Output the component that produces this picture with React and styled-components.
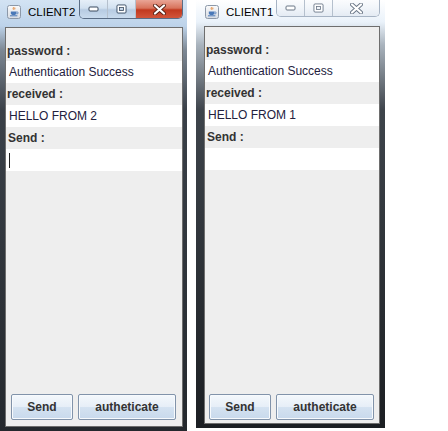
import React from 'react';
import styled, {createGlobalStyle, css} from 'styled-components';

const GlobalStyle = createGlobalStyle`
  html, body {
    margin: 0;
    padding: 0;
    background: #ffffff;
  }
  body {
    font-family: "Liberation Sans", Arial, sans-serif;
  }
`;

const Desktop = styled.div`
  display: flex;
  align-items: flex-start;
  width: 448px;
  height: 431px;
  overflow: hidden;
  background: #ffffff;
`;

const Window = styled.div`
  display: flex;
  flex-direction: column;
  box-sizing: border-box;
  width: ${({ width }) => width}px;
  height: ${({ height }) => height}px;
  margin-right: ${({ gap }) => gap || 0}px;
  padding: 0 ${({ padRight }) => padRight}px 4px ${({ padLeft }) => padLeft}px;
  ${({ active }) => active ? css`
    background: linear-gradient(to bottom, #d3e3f3 0px, #bdd3ea 26px, #7d8894 50px, #3a4048 110px, #24282d 431px);
  ` : css`
    background: linear-gradient(to bottom, #ffffff 0px, #eaf2fa 22px, #a9b3bd 45px, #3e444b 110px, #1c1f23 424px);
  `}
`;

const TitleBar = styled.div`
  display: flex;
  align-items: flex-start;
  height: ${({ h }) => h}px;
  flex: none;
  margin-left: ${({ shift }) => shift || 0}px;
`;

const TitleIcon = styled.div`
  width: 14px;
  height: 14px;
  margin-top: 5px;
  margin-left: 2px;
  flex: none;
  svg { display: block; }
`;

const TitleText = styled.span`
  margin-left: 7px;
  margin-top: 5px;
  font-size: 11.5px;
  line-height: 14px;
  color: #000000;
  font-family: "Liberation Sans", Arial, sans-serif;
  flex: 1;
`;

const Controls = styled.div`
  display: flex;
  height: ${({ active }) => active ? 18 : 16}px;
  border: 1px solid ${({ active }) => active ? '#5a6d86' : '#a7b4c4'};
  border-top: none;
  border-radius: 0 0 5px 5px;
  overflow: hidden;
  flex: none;
`;

const Ctrl = styled.div`
  display: flex;
  align-items: center;
  justify-content: center;
  width: ${({ w }) => w}px;
  & + & {
    border-left: 1px solid ${({ active }) => active ? '#6b7d94' : '#b5c0cd'};
  }
  ${({ kind, active }) => kind === 'close' && active ? css`
    background: linear-gradient(to bottom, #e9a596 0%, #d8735c 45%, #c1391f 55%, #d2553a 100%);
  ` : active ? css`
    background: linear-gradient(to bottom, #e6eff8 0%, #d2e1f0 45%, #b7cbe2 55%, #c9dbee 100%);
  ` : css`
    background: linear-gradient(to bottom, #fbfcfe 0%, #f1f5fa 50%, #e4ebf3 100%);
  `}
  svg { display: block; }
`;

const Panel = styled.div`
  flex: 1;
  display: flex;
  flex-direction: column;
  box-sizing: border-box;
  background: #eeeeee;
  border: 1px solid #6e6e6e;
  padding-top: 13px;
`;

const Label = styled.div`
  height: ${({ h }) => h || 22}px;
  display: flex;
  align-items: center;
  padding-left: ${({ indent }) => indent || 1}px;
  font-weight: bold;
  font-size: 12px;
  color: #333333;
`;

const Field = styled.div`
  height: 22px;
  display: flex;
  align-items: center;
  padding-left: 3px;
  background: #ffffff;
  font-size: 12px;
  color: #23213d;
`;

const Caret = styled.span`
  display: block;
  width: 1px;
  height: 15px;
  background: #222222;
`;

const Spacer = styled.div`
  flex: 1;
`;

const ButtonRow = styled.div`
  display: flex;
  gap: 5px;
  padding: 0 0 ${({ bottom }) => bottom}px ${({ left }) => left}px;
`;

const Button = styled.button`
  box-sizing: border-box;
  width: ${({ w }) => w}px;
  height: 26px;
  margin: 0;
  padding: 0;
  border: 1px solid #8193aa;
  border-radius: 2px;
  box-shadow: inset 0 0 0 1px #f7fafd;
  background: linear-gradient(to bottom, #f4f8fc 0%, #e6eef7 50%, #d4e2f1 51%, #c8d9ec 100%);
  font-family: "Liberation Sans", Arial, sans-serif;
  font-weight: bold;
  font-size: 12px;
  color: #333333;
`;

const JavaIcon = () => (
  <svg width="14" height="14" viewBox="0 0 14 14">
    <defs>
      <linearGradient id="jbg" x1="0" y1="0" x2="0" y2="1">
        <stop offset="0" stopColor="#fbfbfb" />
        <stop offset="1" stopColor="#d6dbe2" />
      </linearGradient>
    </defs>
    <rect x="0.5" y="0.5" width="13" height="13" rx="2" fill="url(#jbg)" stroke="#8c98a8" />
    <path d="M6.2 2.2c1 .8-.8 1.4.2 2.4M7.8 2.6c.7.6-.5 1-.1 1.8" stroke="#e2761b" strokeWidth="1" fill="none" />
    <path d="M3.8 6.6h5.6v1.6c0 1-1 1.8-2.8 1.8s-2.8-.8-2.8-1.8z" fill="#4a79b8" />
    <path d="M9.4 7h.9a.9.9 0 0 1 0 1.8h-1" stroke="#4a79b8" strokeWidth="0.8" fill="none" />
    <path d="M3 10.8h7.4" stroke="#4a79b8" strokeWidth="1" />
  </svg>
);

const MinGlyph = ({ active }) => (
  <svg width="11" height="6" viewBox="0 0 11 6">
    <rect x="1" y="1" width="9" height="4" rx="1" fill="#ffffff" stroke={active ? '#3b4a5e' : '#6a7686'} />
  </svg>
);

const MaxGlyph = ({ active }) => (
  <svg width="11" height="10" viewBox="0 0 11 10">
    <rect x="1" y="1" width="9" height="8" rx="1" fill="none" stroke={active ? '#3b4a5e' : '#6a7686'} />
    <rect x="2.5" y="2.5" width="6" height="5" fill="none" stroke="#ffffff" strokeWidth="1.6" />
    <rect x="3.5" y="3.5" width="4" height="3" fill="none" stroke={active ? '#3b4a5e' : '#6a7686'} strokeWidth="0.8" />
  </svg>
);

const CloseGlyph = ({ active }) => (
  <svg width="13" height="11" viewBox="0 0 13 11">
    <path d="M2 1.5l9 8M11 1.5l-9 8" stroke={active ? '#5a2418' : '#6a7686'} strokeWidth="4" strokeLinecap="round" />
    <path d="M2 1.5l9 8M11 1.5l-9 8" stroke="#ffffff" strokeWidth="2.2" strokeLinecap="round" />
  </svg>
);

const ClientWindow = ({ title, message, active, layout }) => (
  <Window
    active={active}
    width={layout.width}
    height={layout.height}
    gap={layout.gap}
    padLeft={layout.padLeft}
    padRight={layout.padRight}
  >
    <TitleBar h={layout.titleHeight} shift={layout.titleShift}>
      <TitleIcon><JavaIcon /></TitleIcon>
      <TitleText>{title}</TitleText>
      <Controls active={active}>
        <Ctrl active={active} w={27}><MinGlyph active={active} /></Ctrl>
        <Ctrl active={active} w={27}><MaxGlyph active={active} /></Ctrl>
        <Ctrl active={active} kind="close" w={46}><CloseGlyph active={active} /></Ctrl>
      </Controls>
    </TitleBar>
    <Panel>
      <Label h={20}>password :</Label>
      <Field>Authentication Success</Field>
      <Label>received :</Label>
      <Field>{message}</Field>
      <Label indent={2}>Send :</Label>
      <Field>{active && <Caret />}</Field>
      <Spacer />
      <ButtonRow left={layout.btnLeft} bottom={layout.btnBottom}>
        <Button w={62}>Send</Button>
        <Button w={98}>autheticate</Button>
      </ButtonRow>
    </Panel>
  </Window>
);

export default function App() {
  return (
    <>
      <GlobalStyle />
      <Desktop>
        <ClientWindow
          title="CLIENT2"
          message="HELLO FROM 2"
          active
          layout={{ width: 187, height: 431, gap: 9, padLeft: 5, padRight: 4, titleHeight: 27, titleShift: 0, btnLeft: 5, btnBottom: 6 }}
        />
        <ClientWindow
          title="CLIENT1"
          message="HELLO FROM 1"
          layout={{ width: 189, height: 428, gap: 0, padLeft: 8, padRight: 5, titleHeight: 26, titleShift: -1, btnLeft: 4, btnBottom: 3 }}
        />
      </Desktop>
    </>
  );
}
